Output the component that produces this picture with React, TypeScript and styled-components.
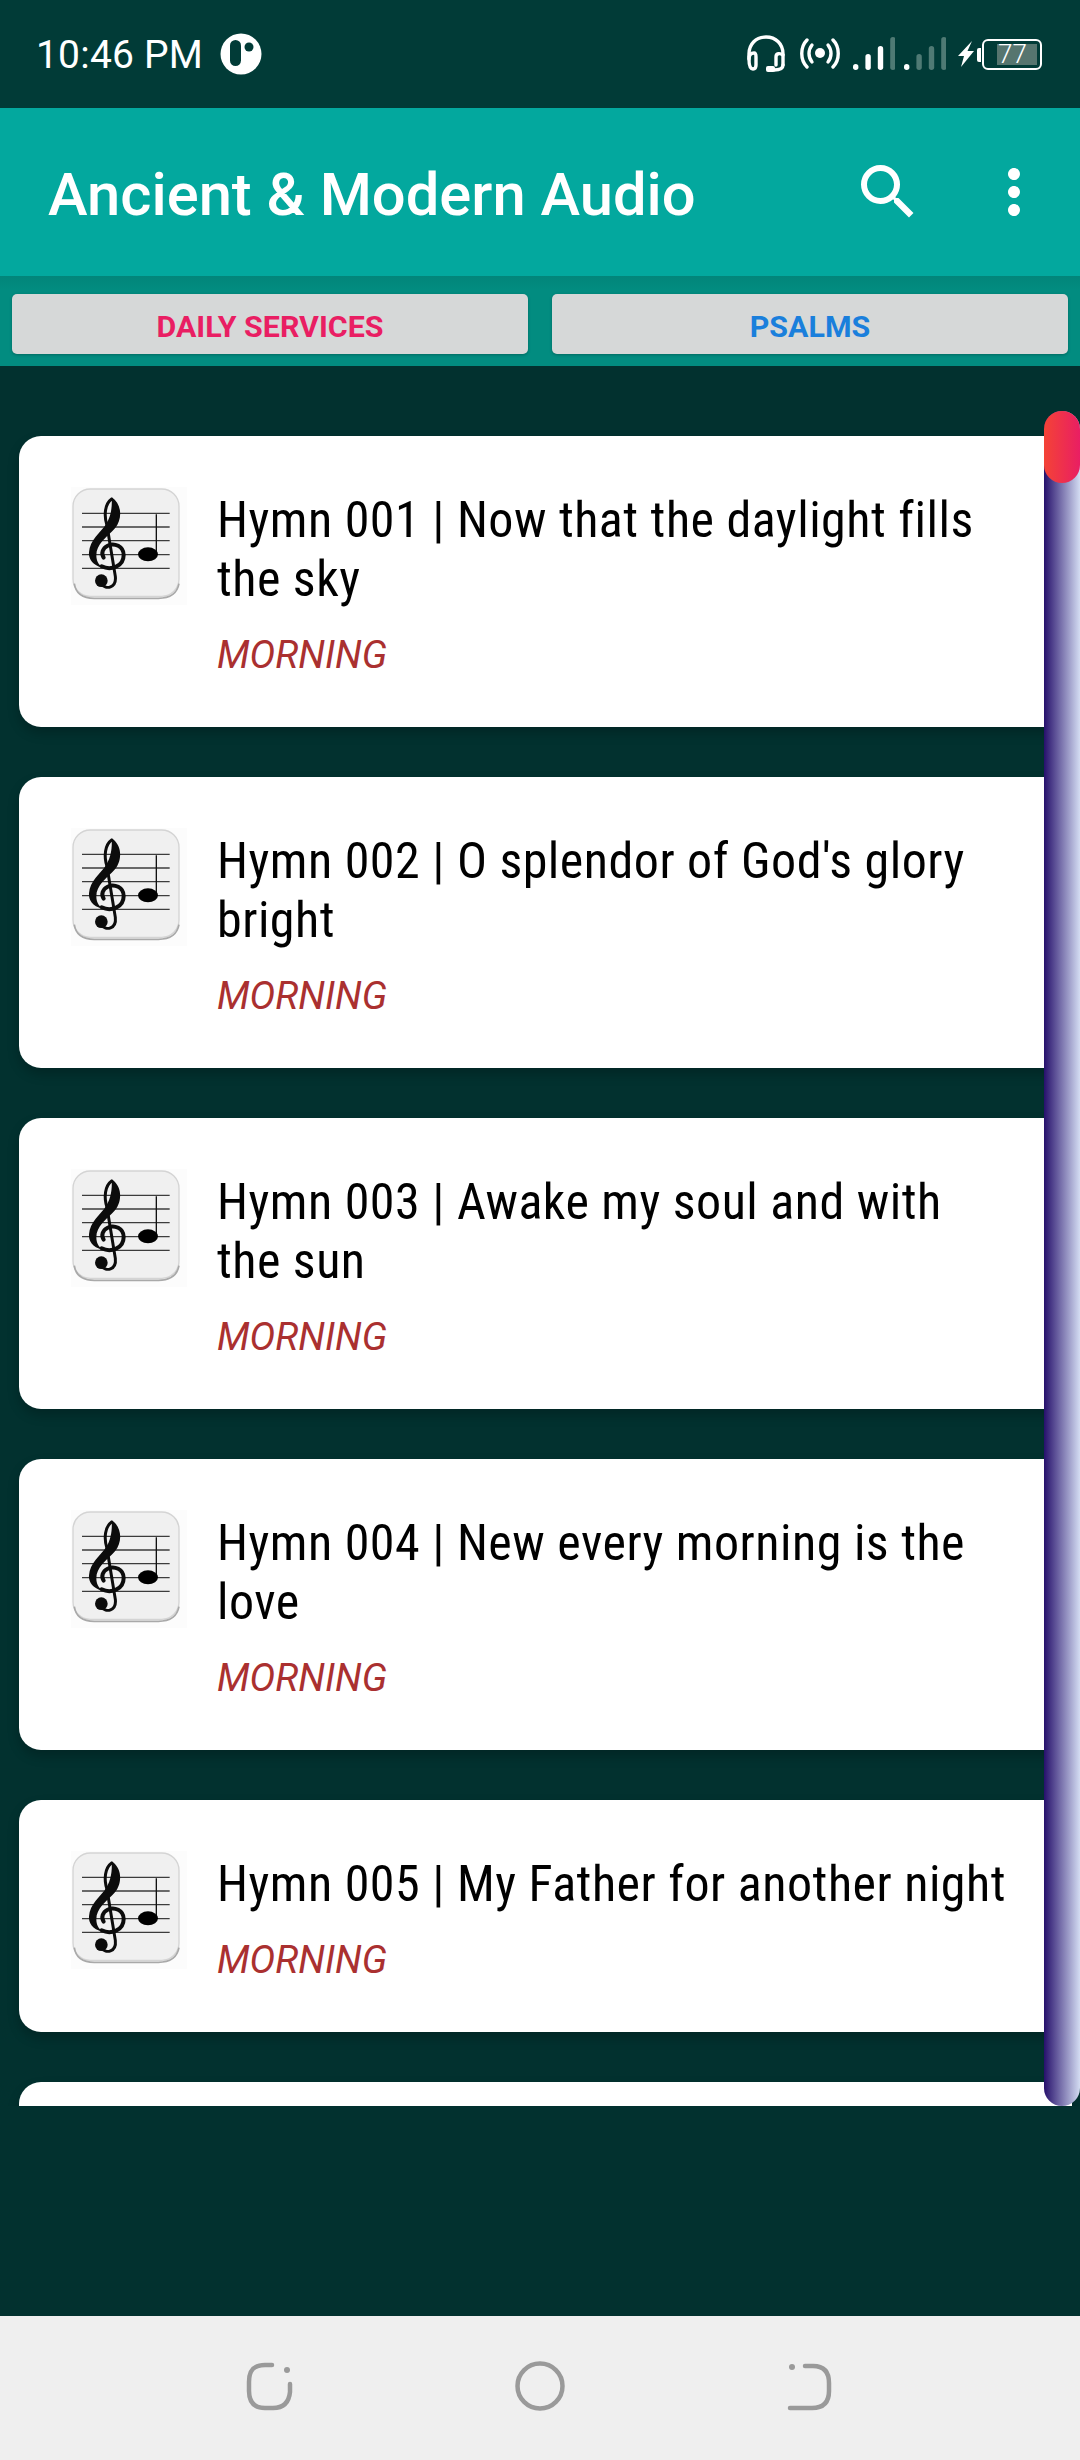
import React from "react";
import styled, { createGlobalStyle } from "styled-components";
import { MdMoreVert, MdSearch } from "react-icons/md";

const GlobalStyle = createGlobalStyle`
  html, body {
    margin: 0;
    padding: 0;
    background: #02312f;
    font-family: Roboto, "Liberation Sans", sans-serif;
  }
`;

const Screen = styled.div`
  width: 1080px;
  height: 2460px;
  display: flex;
  flex-direction: column;
  overflow: hidden;
  background: #02312f;
`;

const StatusBar = styled.div`
  height: 108px;
  box-sizing: border-box;
  display: flex;
  align-items: center;
  padding: 0 0 0 36px;
  background: #013b37;
  color: #fff;
`;

const Clock = styled.span`
  padding-top: 2px;
  font-size: 39px;
  line-height: 44px;
  letter-spacing: 0.2px;
`;

const StatusSpacer = styled.div`
  flex: 1;
`;

const StatusIcons = styled.div`
  display: flex;
  align-items: center;
  height: 50px;
  margin-left: 20px;
`;

const Battery = styled.div`
  position: relative;
  width: 60px;
  height: 31px;
  box-sizing: border-box;
  margin-right: 38px;
  border: 2.5px solid #fff;
  border-radius: 6px;
  display: flex;
  justify-content: flex-end;
  padding: 3px;
  &::before {
    content: "";
    position: absolute;
    left: -7px;
    top: 7px;
    width: 4px;
    height: 14px;
    border-radius: 2px 0 0 2px;
    background: #fff;
  }
`;

const BatteryLevel = styled.div`
  width: 40px;
  box-sizing: border-box;
  padding-left: 1px;
  display: flex;
  align-items: center;
  background: #56756f;
  color: #fff;
  font-size: 26px;
  font-weight: 300;
  line-height: 20px;
`;

const AppBar = styled.div`
  height: 168px;
  box-sizing: border-box;
  display: flex;
  align-items: center;
  padding: 0 30px 0 48px;
  background: #03a89e;
  color: #fff;
`;

const AppTitle = styled.div`
  flex: 1;
  font-size: 59.7px;
  font-weight: 500;
  line-height: 70px;
  margin-top: 5px;
`;

const AppActions = styled.div`
  display: flex;
  gap: 54px;
  font-size: 72px;
  line-height: 0;
  margin-top: -1px;
`;

const TabStrip = styled.div`
  height: 90px;
  box-sizing: border-box;
  display: flex;
  gap: 24px;
  padding: 18px 12px 12px;
  background: linear-gradient(#02857a 0, #028c80 14px, #028c80 100%);
`;

const TabButton = styled.div<{ $color: string }>`
  flex: 1;
  display: flex;
  align-items: center;
  justify-content: center;
  padding-top: 5px;
  background: #d6d8d8;
  border-radius: 5px;
  box-shadow: 0 1px 3px rgba(0, 0, 0, 0.25);
  color: ${({ $color }) => $color};
  font-size: 30.4px;
  font-weight: 700;
`;

const Content = styled.div`
  flex: 1;
  padding-top: 45px;
`;

const ListArea = styled.div`
  position: relative;
  height: 1695px;
  overflow: hidden;
`;

const CardList = styled.div`
  display: flex;
  flex-direction: column;
  gap: 50px;
  padding: 25px 8px 0 19px;
`;

const Card = styled.div`
  display: flex;
  align-items: flex-start;
  flex-shrink: 0;
  box-sizing: border-box;
  padding: 55px 0 50px 52px;
  background: #fff;
  border-radius: 22px;
  box-shadow: 0 6px 12px rgba(0, 0, 0, 0.22);
`;

const CardThumb = styled.svg`
  width: 116px;
  height: 118px;
  flex-shrink: 0;
  margin-top: -4px;
`;

const CardBody = styled.div`
  width: 794px;
  margin-left: 30px;
`;

const CardTitle = styled.div`
  font-size: 50px;
  font-stretch: 75%;
  line-height: 59px;
  letter-spacing: 0.5px;
  color: #000;
`;

const CardTag = styled.div`
  margin-top: 24px;
  font-size: 38.5px;
  font-style: italic;
  line-height: 44px;
  color: #aa3030;
`;

const ScrollTrack = styled.div`
  position: absolute;
  top: 0;
  right: 0;
  bottom: 0;
  width: 36px;
  border-radius: 18px;
  background: linear-gradient(to right, #26106c, #d3dcf2);
`;

const ScrollThumb = styled.div`
  height: 72px;
  border-radius: 18px;
  background: linear-gradient(to right, #f44336, #e91e63);
`;

const NavBar = styled.div`
  height: 144px;
  box-sizing: border-box;
  display: grid;
  grid-template-columns: repeat(3, 270px);
  justify-items: center;
  align-items: center;
  padding: 0 135px 4px;
  background: #efefef;
`;

const NavIcon = styled.svg`
  width: 56px;
  height: 56px;
  fill: none;
  stroke: #9a9a9a;
  stroke-width: 4.5;
  stroke-linecap: round;
`;

const hymns = [
  "Hymn 001 | Now that the daylight fills the sky",
  "Hymn 002 | O splendor of God's glory bright",
  "Hymn 003 | Awake my soul and with the sun",
  "Hymn 004 | New every morning is the love",
  "Hymn 005 | My Father for another night",
];

function NoteIcon() {
  return (
    <CardThumb viewBox="0 0 348 354">
      <rect x="0" y="0" width="348" height="354" fill="#fcfcfc" />
      <rect x="6" y="6" width="318" height="322" rx="52" fill="#f0f0f0" stroke="#d4d4d4" strokeWidth="4" />
      <path d="M10 290 Q16 334 70 334 H262 Q316 334 324 290" fill="none" stroke="#a9a9a9" strokeWidth="5" />
      <g stroke="#3c3c3c" strokeWidth="4">
        <path d="M33 79H296M33 120H296M33 161H296M33 203H296M33 244H296" />
      </g>
      <path d="M256 82V203" stroke="#111" strokeWidth="4" />
      <ellipse cx="231" cy="202" rx="30" ry="21" fill="#000" />
      <g fill="none" stroke="#0c0c0c" strokeLinecap="round">
        <path d="M122 36C102 50 98 84 108 116L133 268C137 304 104 308 92 292" strokeWidth="9" />
        <path d="M92 238C120 252 158 238 158 204C158 178 130 166 110 176C94 184 90 200 98 212" strokeWidth="12" />
      </g>
      <path
        d="M122 31C152 50 156 95 132 124C106 152 76 172 76 205C76 222 82 232 94 242C64 236 52 214 54 196C56 158 90 136 106 110C120 88 124 60 122 31Z"
        fill="#0c0c0c"
      />
      <circle cx="91" cy="281" r="19" fill="#0c0c0c" />
    </CardThumb>
  );
}

function LogoBadge() {
  return (
    <svg width="42" height="42" viewBox="0 0 42 42" style={{ marginLeft: 17 }}>
      <circle cx="21" cy="21" r="20.5" fill="#fff" />
      <rect x="10" y="7" width="11" height="26" rx="5.5" fill="#013b37" />
      <circle cx="29" cy="14" r="4.5" fill="#013b37" />
    </svg>
  );
}

function Headset() {
  return (
    <svg width="40" height="38" viewBox="0 0 40 38" fill="none" stroke="#fff" strokeWidth="3.4" strokeLinecap="round">
      <path d="M3 24V19C3 9 10 2 20 2S37 9 37 19V30" />
      <path d="M3 24C3 20 5 18 8 18C10 18 10 20 10 22V30C10 33 9 34 7 34C4 34 3 30 3 24Z" />
      <path d="M37 20C34 18 30 18 30 22V30" />
      <path d="M37 30C37 33 34 35 28 35" />
      <rect x="20" y="31" width="9" height="6" rx="2" fill="#fff" stroke="none" />
    </svg>
  );
}

function Hotspot() {
  return (
    <svg width="40" height="32" viewBox="0 0 40 32" fill="none" stroke="#fff" strokeWidth="3.4" strokeLinecap="round" style={{ marginLeft: 14 }}>
      <circle cx="20" cy="15" r="5" fill="#fff" stroke="none" />
      <path d="M12 7C8 12 8 19 12 24M28 7C32 12 32 19 28 24" />
      <path d="M7 2C0 9 0 22 7 29M33 2C40 9 40 22 33 29" />
    </svg>
  );
}

function Signal({ lit, ml }: { lit: number; ml: number }) {
  const bars = [6, 16, 24, 33];
  return (
    <svg width="42" height="34" viewBox="0 0 42 34" style={{ marginLeft: ml }}>
      {bars.map((h, i) => (
        <rect key={i} x={i * 12.4} y={33 - h} width="5.4" height={h} rx="2.7" fill={i < lit ? "#fff" : "#4f7a74"} />
      ))}
    </svg>
  );
}

function Bolt() {
  return (
    <svg width="16" height="26" viewBox="0 0 16 26" style={{ marginLeft: 12, marginRight: 8 }}>
      <path d="M14 0L0 15H6L3 26L16 10H9.5Z" fill="#fff" />
    </svg>
  );
}

export default function App() {
  return (
    <Screen>
      <GlobalStyle />
      <StatusBar>
        <Clock>10:46 PM</Clock>
        <LogoBadge />
        <StatusSpacer />
        <StatusIcons>
          <Headset />
          <Hotspot />
          <Signal lit={3} ml={13} />
          <Signal lit={1} ml={9} />
          <Bolt />
          <Battery>
            <BatteryLevel>77</BatteryLevel>
          </Battery>
        </StatusIcons>
      </StatusBar>
      <AppBar>
        <AppTitle>Ancient &amp; Modern Audio</AppTitle>
        <AppActions>
          <MdSearch />
          <MdMoreVert />
        </AppActions>
      </AppBar>
      <TabStrip>
        <TabButton $color="#e91e63">DAILY SERVICES</TabButton>
        <TabButton $color="#1a7fdc">PSALMS</TabButton>
      </TabStrip>
      <Content>
        <ListArea>
          <CardList>
            {hymns.map((title) => (
              <Card key={title}>
                <NoteIcon />
                <CardBody>
                  <CardTitle>{title}</CardTitle>
                  <CardTag>MORNING</CardTag>
                </CardBody>
              </Card>
            ))}
            <Card>
              <NoteIcon />
            </Card>
          </CardList>
          <ScrollTrack>
            <ScrollThumb />
          </ScrollTrack>
        </ListArea>
      </Content>
      <NavBar>
        <NavIcon viewBox="0 0 56 56">
          <path d="M30 7H23C11 7 7 13 7 24V33C7 45 13 50 23 50H31C42 50 47 44 48 34V26" />
          <circle cx="45" cy="12" r="3" fill="#9a9a9a" stroke="none" />
        </NavIcon>
        <NavIcon viewBox="0 0 56 56">
          <circle cx="28" cy="28" r="22.5" />
        </NavIcon>
        <NavIcon viewBox="0 0 56 56">
          <path d="M23 8H31C42 8 47 14 47 25V33C47 45 41 50 30 50H8" />
          <circle cx="10" cy="9" r="3" fill="#9a9a9a" stroke="none" />
        </NavIcon>
      </NavBar>
    </Screen>
  );
}
